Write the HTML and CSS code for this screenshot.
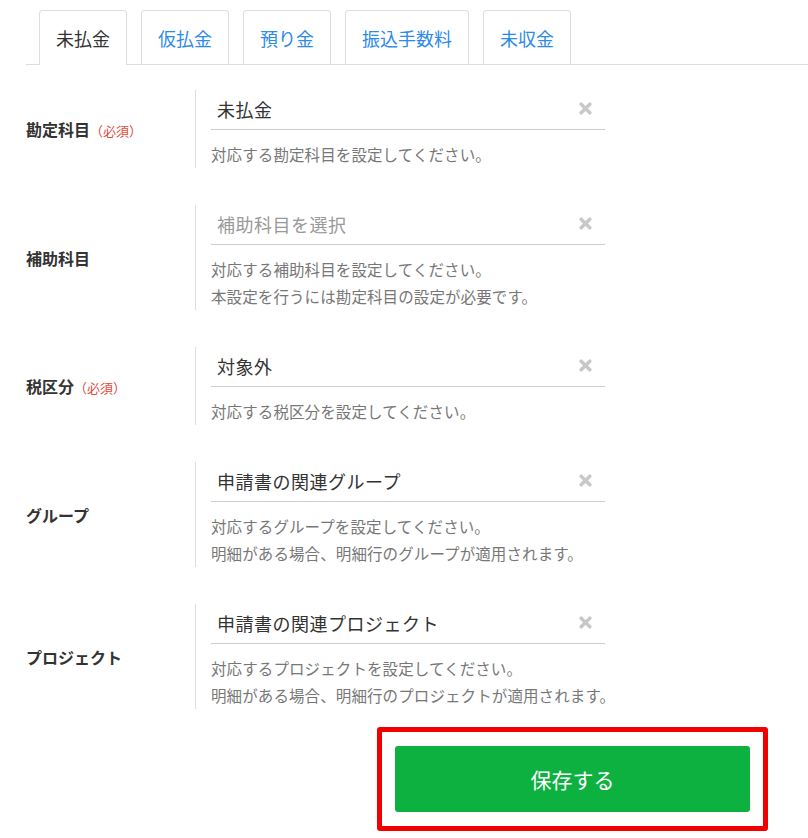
FILE: index.html
```html
<!DOCTYPE html>
<html lang="ja">
<head>
<meta charset="utf-8">
<link rel="stylesheet" href="styles.css">
</head>
<body>
<div class="page">
  <div class="tabs">
    <div class="tab active">未払金</div>
    <div class="tab">仮払金</div>
    <div class="tab">預り金</div>
    <div class="tab">振込手数料</div>
    <div class="tab">未収金</div>
  </div>

  <div class="form">
    <div class="row">
      <div class="label">勘定科目<span class="req">（必須）</span></div>
      <div class="field">
        <div class="input"><span class="value">未払金</span><svg class="clear" viewBox="0 0 12 12"><path d="M2 2L10 10M10 2L2 10"/></svg></div>
        <div class="help">対応する勘定科目を設定してください。</div>
      </div>
    </div>
    <div class="row">
      <div class="label">補助科目</div>
      <div class="field">
        <div class="input"><span class="placeholder">補助科目を選択</span><svg class="clear" viewBox="0 0 12 12"><path d="M2 2L10 10M10 2L2 10"/></svg></div>
        <div class="help">対応する補助科目を設定してください。<br>本設定を行うには勘定科目の設定が必要です。</div>
      </div>
    </div>
    <div class="row">
      <div class="label">税区分<span class="req">（必須）</span></div>
      <div class="field">
        <div class="input"><span class="value">対象外</span><svg class="clear" viewBox="0 0 12 12"><path d="M2 2L10 10M10 2L2 10"/></svg></div>
        <div class="help">対応する税区分を設定してください。</div>
      </div>
    </div>
    <div class="row">
      <div class="label">グループ</div>
      <div class="field">
        <div class="input"><span class="value">申請書の関連グループ</span><svg class="clear" viewBox="0 0 12 12"><path d="M2 2L10 10M10 2L2 10"/></svg></div>
        <div class="help">対応するグループを設定してください。<br>明細がある場合、明細行のグループが適用されます。</div>
      </div>
    </div>
    <div class="row">
      <div class="label">プロジェクト</div>
      <div class="field">
        <div class="input"><span class="value">申請書の関連プロジェクト</span><svg class="clear" viewBox="0 0 12 12"><path d="M2 2L10 10M10 2L2 10"/></svg></div>
        <div class="help">対応するプロジェクトを設定してください。<br>明細がある場合、明細行のプロジェクトが適用されます。</div>
      </div>
    </div>
  </div>

  <div class="actions">
    <div class="highlight">
      <button class="btn">保存する</button>
    </div>
  </div>
</div>
</body>
</html>
```

FILE: styles.css
```css
html, body {
  margin: 0;
  padding: 0;
  background: #fff;
}
body {
  font-family: "Noto Sans CJK JP", "Noto Sans", sans-serif;
  color: #333;
}
.page {
  padding-left: 26px;
}
.tabs {
  display: flex;
  gap: 14px;
  padding: 10px 0 0 13px;
  border-bottom: 1px solid #ddd;
}
.tab {
  height: 54px;
  line-height: 54px;
  padding: 0 16px;
  border: 1px solid #ddd;
  border-bottom: none;
  border-radius: 4px 4px 0 0;
  font-size: 18px;
  color: #2d8ae8;
  box-sizing: border-box;
}
.tab.active {
  color: #333;
  background: #fff;
  height: 55px;
  margin-bottom: -1px;
}
.form {
  padding-top: 25px;
}
.row {
  display: grid;
  grid-template-columns: 169px 410px;
  margin-bottom: 37px;
}
.label {
  align-self: center;
  font-size: 16px;
  font-weight: bold;
  color: #333;
}
.req {
  font-size: 13px;
  font-weight: normal;
  color: #e04a3c;
}
.field {
  border-left: 1px solid #ddd;
  padding-left: 15px;
}
.input {
  height: 40px;
  border-bottom: 1px solid #ccc;
  display: flex;
  align-items: center;
  justify-content: space-between;
  padding: 0 13px 2px 6px;
  font-size: 18px;
  letter-spacing: 0.5px;
  width: 394px;
  box-sizing: border-box;
}
.value {
  color: #333;
}
.placeholder {
  color: #999;
}
.clear {
  width: 13px;
  height: 13px;
  fill: none;
  stroke: #c8c8c8;
  stroke-width: 3.2;
  stroke-linecap: round;
}
.help {
  padding-top: 11px;
  font-size: 15.5px;
  letter-spacing: 0.1px;
  line-height: 27px;
  color: #777;
  white-space: nowrap;
}
.actions {
  display: flex;
  padding-left: 351px;
  margin-top: -19px;
}
.highlight {
  border: 5px solid #f20000;
  border-radius: 3px;
  padding: 14px 13px;
}
.btn {
  display: block;
  width: 355px;
  height: 66px;
  border: none;
  border-radius: 3px;
  background: #0db13f;
  color: #fff;
  font-family: "Noto Sans CJK JP", "Noto Sans", sans-serif;
  font-size: 21px;
  padding: 0;
}
```
